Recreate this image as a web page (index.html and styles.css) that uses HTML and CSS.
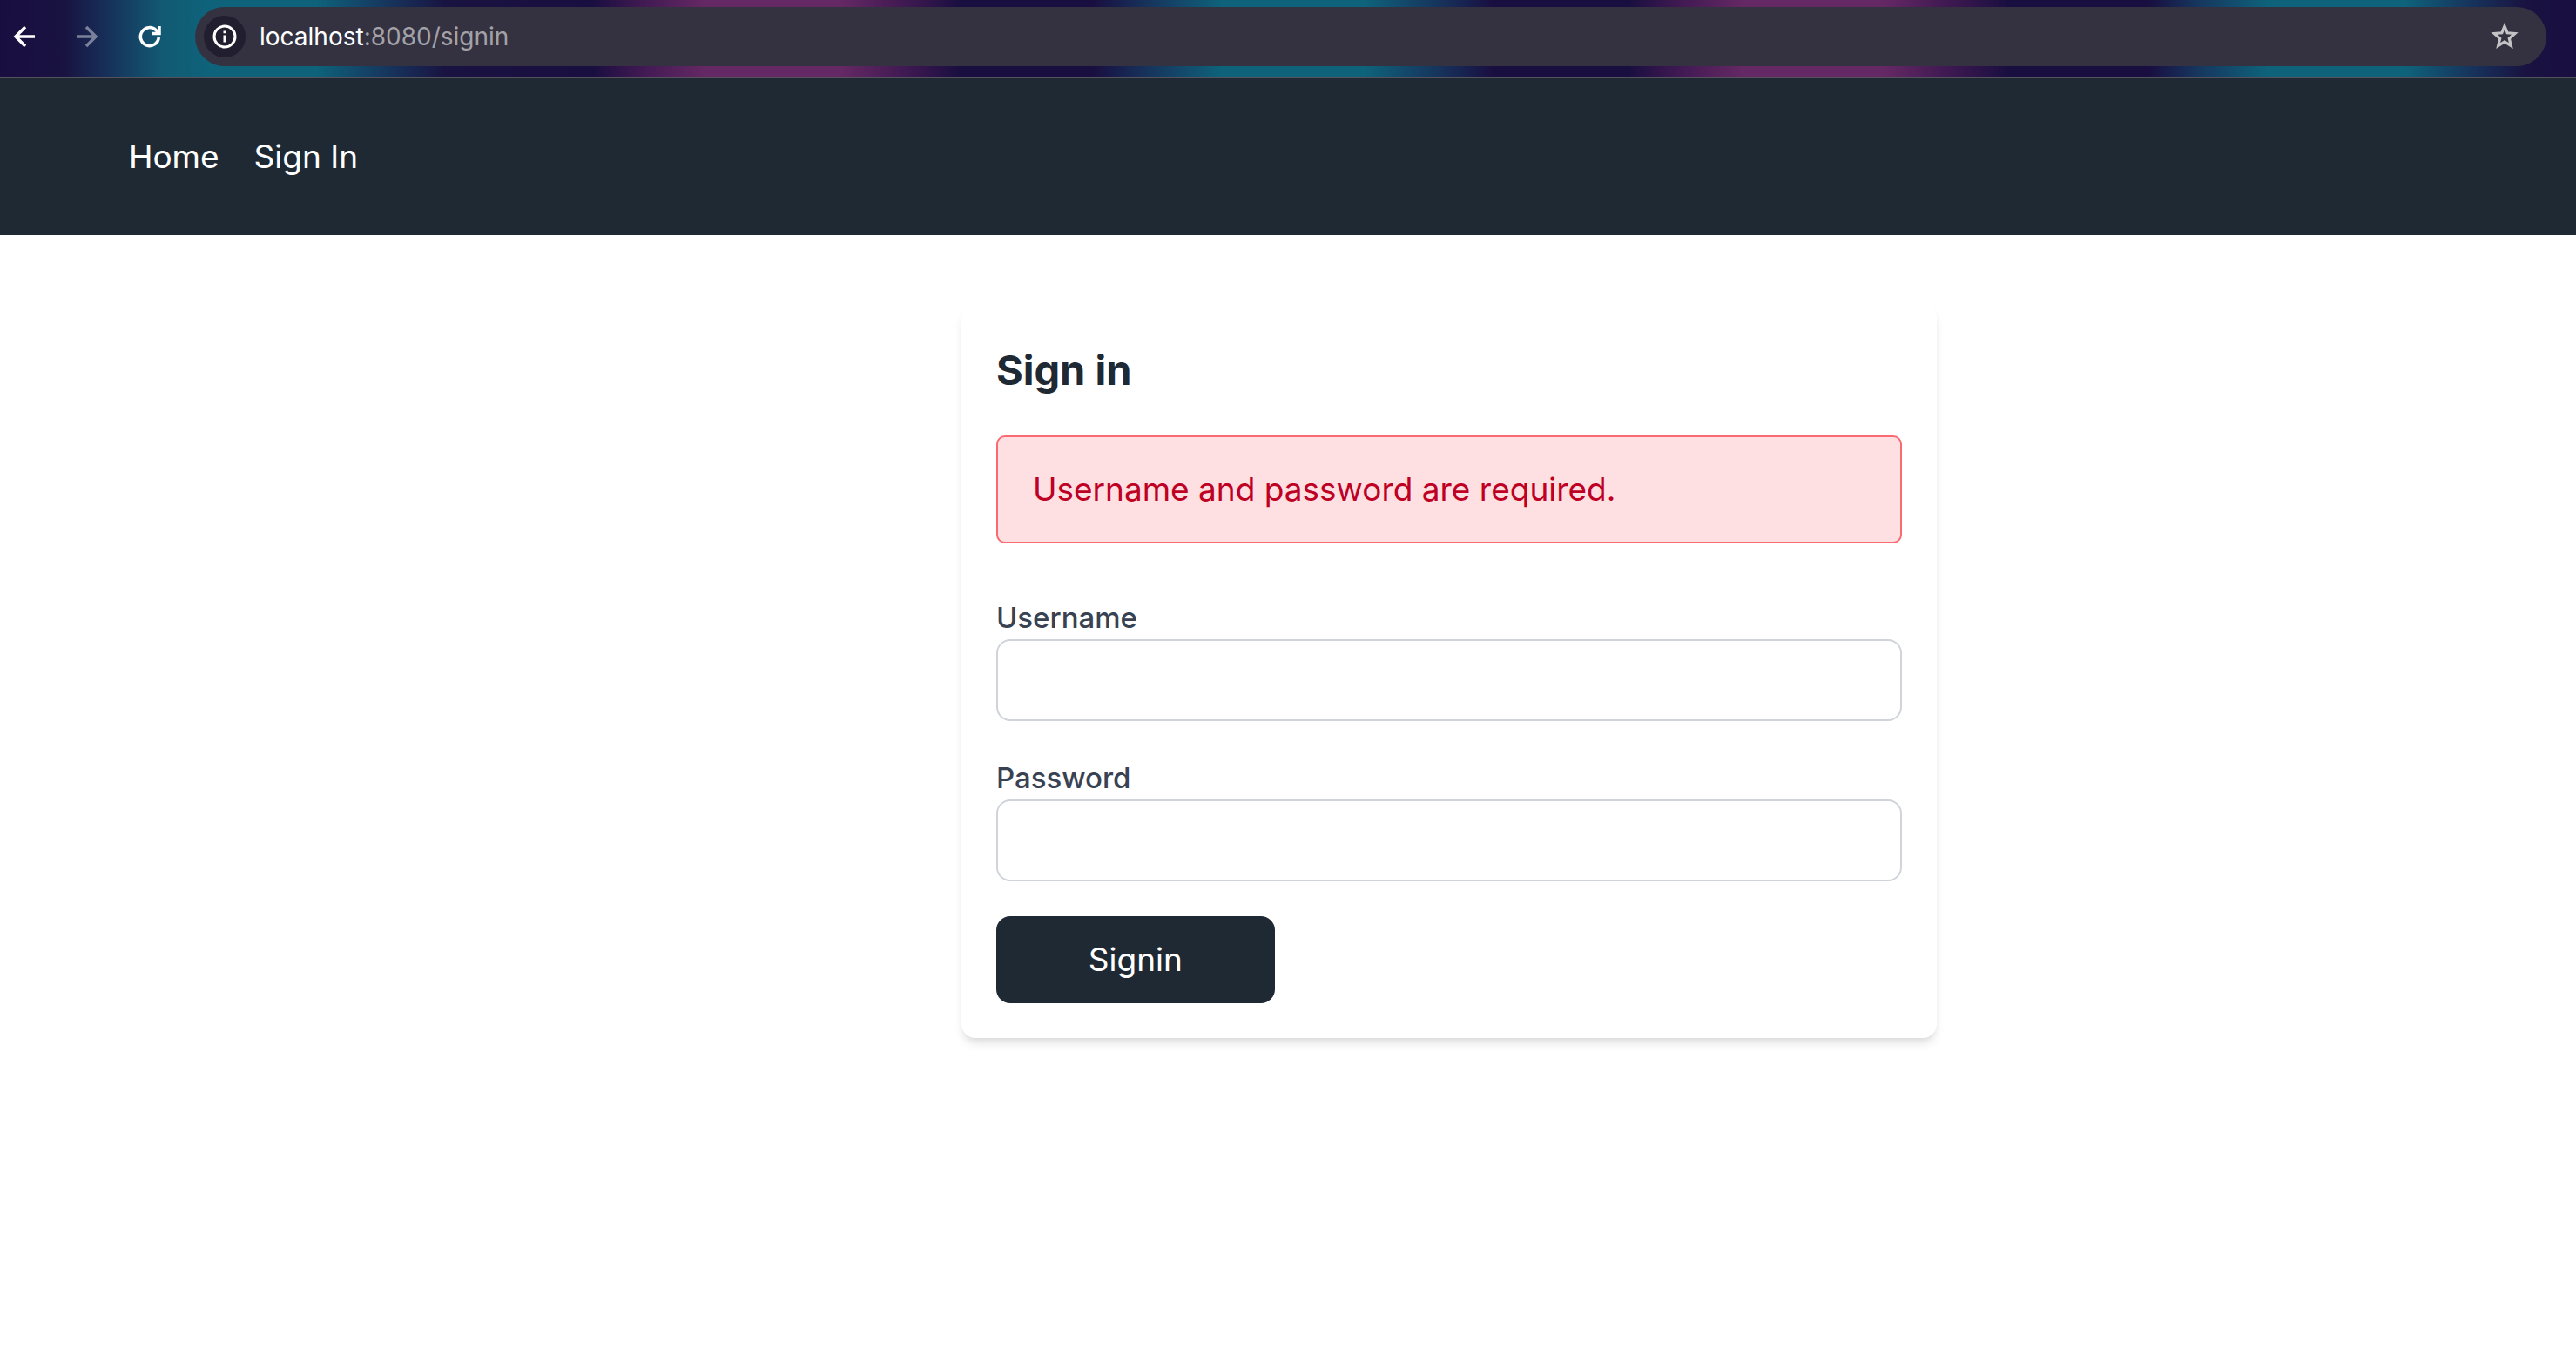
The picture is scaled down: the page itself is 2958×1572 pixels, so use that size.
FILE: index.html
```html
<!DOCTYPE html>
<html lang="en">
<head>
<meta charset="utf-8">
<meta name="viewport" content="width=device-width, initial-scale=1">
<title>Sign in</title>
<link rel="stylesheet" href="styles.css">
</head>
<body>
<div class="toolbar">
  <div class="tools">
    <button class="tool" type="button" aria-label="Back">
      <svg class="tool-icon" viewBox="0 0 32 32"><path d="M28 16H6M17 5L6 16l11 11"/></svg>
    </button>
    <button class="tool tool-muted" type="button" aria-label="Forward">
      <svg class="tool-icon" viewBox="0 0 32 32"><path d="M4 16h22M15 5l11 11-11 11"/></svg>
    </button>
    <button class="tool" type="button" aria-label="Reload">
      <svg class="tool-icon" viewBox="0 0 32 32"><path d="M26.300 17A10.500 10.500 0 1 1 23.300 8.700L26 11.500M27 4v8.500H18"/></svg>
    </button>
  </div>
  <div class="address">
    <button class="site-info" type="button" aria-label="Site information">
      <svg class="info-icon" viewBox="0 0 28 28"><circle cx="14" cy="14" r="12"/><path d="M14 12.500v8M14 7.500v2.800"/></svg>
    </button>
    <span class="url"><span class="url-host">localhost</span>:8080/signin</span>
    <button class="bookmark" type="button" aria-label="Bookmark this page">
      <svg class="star-icon" viewBox="0 0 40 40"><path d="M20 8L23.200 15.800L31.800 16.500L25.300 22.200L27.300 30.500L20 26L12.700 30.500L14.700 22.200L8.200 16.500L16.800 15.800Z"/></svg>
    </button>
  </div>
</div>
<nav class="nav">
  <a class="nav-link" href="/">Home</a>
  <a class="nav-link" href="/signin">Sign In</a>
</nav>
<main class="main">
  <section class="card">
    <h1 class="title">Sign in</h1>
    <div class="alert" role="alert">Username and password are required.</div>
    <form class="form" action="/signin" method="post">
      <div class="field">
        <label class="label" for="username">Username</label>
        <input class="input" id="username" name="username" type="text">
      </div>
      <div class="field">
        <label class="label" for="password">Password</label>
        <input class="input" id="password" name="password" type="password">
      </div>
      <button class="submit" type="submit">Signin</button>
    </form>
  </section>
</main>
</body>
</html>
```
FILE: styles.css
```css
* {
  box-sizing: border-box;
}

body {
  margin: 0;
  background: #fff;
  color: #1f2934;
  font-family: Inter, "Liberation Sans", sans-serif;
  font-size: 37px;
  line-height: 60px;
}

button,
input {
  font: inherit;
}

/* Browser toolbar */
.toolbar {
  display: flex;
  align-items: center;
  gap: 36px;
  padding: 8px 34px 12px 12px;
  border-bottom: 2px solid #54525f;
  background: linear-gradient(90deg,
    #190e40 0%, #191341 2.5%, #16365e 4.5%, #125a73 6.3%, #0e627a 8%, #0e627a 12.3%, #16365e 15%, #191341 17.3%,
    #190e40 23%, #421a53 25%, #642864 27.3%, #642864 32.7%, #421a53 35%, #190e40 37.3%,
    #190e40 42.4%, #16365e 44.7%, #0e627a 47.4%, #0e627a 53%, #16365e 55.7%, #190e40 58%,
    #190e40 63.2%, #421a53 65.3%, #642864 67.6%, #642864 73.2%, #421a53 75.4%, #190e40 78%,
    #190e40 83.4%, #16365e 85.3%, #0e627a 88%, #0e627a 93.4%, #16365e 95.8%, #191341 98%, #190e40 100%);
}

.tools {
  display: flex;
  gap: 40px;
}

.tool,
.site-info,
.bookmark {
  display: flex;
  align-items: center;
  justify-content: center;
  flex: none;
  padding: 0;
  border: 0;
  background: none;
  color: #fff;
}

.tool-icon {
  width: 32px;
  height: 32px;
  fill: none;
  stroke: currentColor;
  stroke-width: 3.5;
}

.tool-muted {
  color: #7b809b;
}

.address {
  display: flex;
  align-items: center;
  flex: 1;
  gap: 16px;
  min-width: 0;
  height: 68px;
  padding: 0 28px 0 10px;
  border-radius: 34px;
  background: #343241;
}

.site-info {
  width: 48px;
  height: 48px;
  border-radius: 50%;
  background: #201e2f;
}

.info-icon {
  width: 28px;
  height: 28px;
  fill: none;
  stroke: currentColor;
  stroke-width: 3;
}

.url {
  flex: 1;
  color: #a3a2a9;
  font-size: 28px;
  line-height: 40px;
}

.url-host {
  color: #fff;
}

.bookmark {
  color: #c3c2c4;
}

.star-icon {
  width: 40px;
  height: 40px;
  fill: none;
  stroke: currentColor;
  stroke-width: 3.2;
}

/* Site navigation */
.nav {
  display: flex;
  align-items: center;
  gap: 40px;
  padding: 60px 5%;
  background: #1f2934;
}

.nav-link {
  color: #fff;
  text-decoration: none;
}

/* Sign-in card */
.main {
  display: flex;
  justify-content: center;
  padding: 80px 0 80px 12.5%;
}

.card {
  width: 100%;
  max-width: 1120px;
  padding: 40px;
  border-radius: 16px;
  background: #fff;
  box-shadow: 0 8px 12px -2px rgba(0, 0, 0, 0.1), 0 4px 8px -4px rgba(0, 0, 0, 0.1);
}

.title {
  margin: 0 0 40px;
  font-size: 47px;
  font-weight: 700;
  line-height: 70px;
}

.alert {
  margin-bottom: 60px;
  padding: 30px 40px;
  border: 2px solid #fb6a72;
  border-radius: 10px;
  background: #ffe0e2;
  color: #bd0024;
}

.form {
  display: flex;
  flex-direction: column;
  align-items: flex-start;
  gap: 40px;
}

.field {
  display: flex;
  flex-direction: column;
  width: 100%;
}

.label {
  color: #384252;
  font-size: 33px;
  font-weight: 500;
  line-height: 50px;
}

.input {
  width: 100%;
  height: 94px;
  padding: 16px 24px;
  border: 2px solid #d0d4da;
  border-radius: 16px;
  background: #fff;
}

.submit {
  width: 320px;
  padding: 20px;
  border: 0;
  border-radius: 16px;
  background: #1f2934;
  color: #fff;
}
```
